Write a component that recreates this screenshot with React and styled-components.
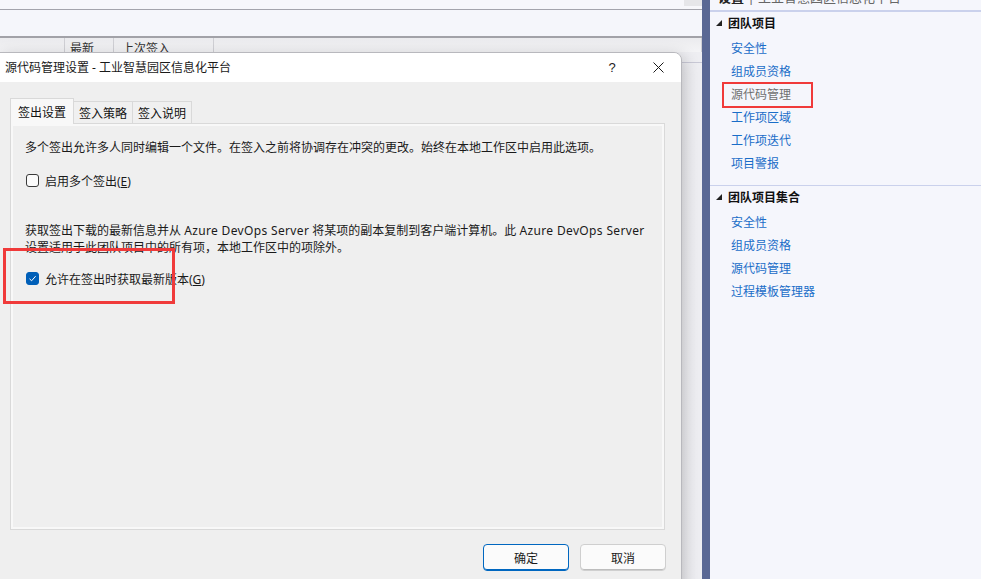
import React from "react";
import styled, { createGlobalStyle } from "styled-components";

const UI = `"Noto Sans", "Noto Sans CJK SC", sans-serif`;

const Global = createGlobalStyle`
  html, body { margin: 0; padding: 0; overflow: hidden; background: #f5f6fc; }
  body { font-family: ${UI}; font-size: 12px; color: #1b1b1b; }
  * { box-sizing: border-box; }
`;

const Screen = styled.div`
  display: flex;
  width: 981px;
  height: 579px;
  overflow: hidden;
`;

/* ---------- background window (left) ---------- */
const LeftArea = styled.div`
  position: relative;
  width: 702px;
  flex: none;
  display: flex;
  flex-direction: column;
  background: #eeeef2;
`;

const TopStrip = styled.div`
  height: 10px;
  background: #f7f7fb;
  border-bottom: 1px solid #a4a4ac;
  display: flex;
  justify-content: flex-end;
`;

const ScrollNub = styled.div`
  width: 18px;
  height: 6px;
  background: #e6e6e9;
`;

const Toolbar = styled.div`
  height: 28px;
  background: #f5f6fb;
  border-bottom: 2px solid #a2a2a8;
`;

const GridHeader = styled.div`
  display: flex;
  height: 14px;
  background: linear-gradient(#ebebee, #f4f4f6);
  overflow: hidden;
`;

const HeaderCell = styled.div`
  width: ${(p) => p.$w}px;
  flex: ${(p) => (p.$w ? "none" : "1")};
  border-right: 1px solid #d0d0d5;
  padding: 3px 0 0 ${(p) => p.$pad || 0}px;
  line-height: 16px;
  color: #333;
  white-space: nowrap;
`;

const ListArea = styled.div`
  flex: 1;
  background: linear-gradient(to right, #e2e2e6, #eeeef2);
`;

const ListRow = styled.div`
  height: 11px;
  border-bottom: 1px solid #c9c9d6;
`;

/* ---------- dialog ---------- */
const Dialog = styled.div`
  position: absolute;
  left: -1px;
  top: 52px;
  width: 683px;
  height: 545px;
  background: #efefef;
  border: 1px solid #b8b8bd;
  border-top-right-radius: 8px;
  box-shadow: 2px 4px 16px rgba(0, 0, 0, 0.22);
  display: flex;
  flex-direction: column;
  overflow: hidden;
`;

const TitleBar = styled.div`
  height: 29px;
  flex: none;
  background: #ffffff;
  display: flex;
  align-items: center;
`;

const Title = styled.div`
  flex: 1;
  padding-left: 5px;
  font-size: 12px;
  line-height: 29px;
  color: #1a1a1a;
  white-space: nowrap;
`;

const TitleButton = styled.div`
  width: 46px;
  height: 29px;
  display: flex;
  align-items: center;
  justify-content: center;
  font-family: "Liberation Sans", sans-serif;
  font-size: 13px;
  color: #222;
`;

const Body = styled.div`
  flex: 1;
  display: flex;
  flex-direction: column;
  padding: 16px 16px 0 10px;
`;

const Tabs = styled.div`
  display: flex;
  align-items: flex-end;
  height: 26px;
  margin-bottom: -1px;
  position: relative;
  z-index: 1;
`;

const Tab = styled.div`
  height: ${(p) => (p.$active ? 26 : 23)}px;
  padding: 0 ${(p) => (p.$active ? 7 : 5)}px;
  margin-left: ${(p) => (p.$first ? 0 : -1)}px;
  display: flex;
  align-items: center;
  border: 1px solid #d9d9d9;
  border-bottom: ${(p) => (p.$active ? "none" : "1px solid #d9d9d9")};
  background: ${(p) => (p.$active ? "#f8f8f8" : "#f0f0f0")};
  color: #111;
  white-space: nowrap;
`;

const Panel = styled.div`
  height: 407px;
  border: 1px solid #d9d9d9;
  box-shadow: inset 0 0 0 2px #f8f8f8;
  background: #efefef;
  padding: 15px 15px 0 14px;
  display: flex;
  flex-direction: column;
`;

const Para = styled.p`
  margin: ${(p) => p.$top || 0}px 0 0;
  line-height: 17px;
  font-size: 12px;
  color: #1a1a1a;
  white-space: nowrap;
`;

const Latin = styled.span`
  letter-spacing: 0.35px;
`;

const CheckRow = styled.div`
  position: relative;
  display: flex;
  align-items: center;
  gap: 6px;
  height: 17px;
  margin-top: ${(p) => p.$top}px;
  padding-left: 1px;
  color: #1a1a1a;
`;

const Box = styled.span`
  width: 13px;
  height: 13px;
  flex: none;
  border-radius: 3px;
  border: 1px solid ${(p) => (p.$checked ? "#005fb8" : "#3a3a3a")};
  background: ${(p) => (p.$checked ? "#005fb8" : "#fbfbfb")};
  display: flex;
  align-items: center;
  justify-content: center;
`;

const RedBox = styled.div`
  position: absolute;
  left: ${(p) => p.$l}px;
  top: ${(p) => p.$t}px;
  width: ${(p) => p.$w}px;
  height: ${(p) => p.$h}px;
  border: ${(p) => p.$b}px solid #f03a3a;
  pointer-events: none;
`;

const ButtonRow = styled.div`
  display: flex;
  justify-content: flex-end;
  gap: 11px;
  margin-top: 14px;
  margin-right: -1px;
`;

const Button = styled.button`
  width: 86px;
  height: 27px;
  border-radius: 4px;
  border: 1px solid ${(p) => (p.$primary ? "#0067c0" : "#cfcfcf")};
  box-shadow: ${(p) => (p.$primary ? "inset 0 -1px 0 #0067c0" : "inset 0 -1px 0 #bdbdbd")};
  background: #fbfbfb;
  font-family: ${UI};
  font-size: 12px;
  color: #1a1a1a;
  padding: 0;
`;

/* ---------- divider ---------- */
const Divider = styled.div`
  width: 8px;
  flex: none;
  background: #5a6894;
`;

/* ---------- right panel ---------- */
const RightPanel = styled.div`
  flex: 1;
  background: #f5f6fc;
  display: flex;
  flex-direction: column;
`;

const RightTop = styled.div`
  height: 12px;
  border-bottom: 2px solid #cad1ec;
  overflow: hidden;
  padding-left: 8px;
`;

const TopTitle = styled.div`
  margin-top: -11px;
  line-height: 16px;
  font-size: 13px;
  white-space: nowrap;
  color: #666;
  b { color: #222; }
`;

const Section = styled.div`
  padding: 1px 0 ${(p) => (p.$last ? 0 : 10)}px;
  border-bottom: ${(p) => (p.$last ? "none" : "1px solid #cad1ec")};
`;

const SectionHead = styled.div`
  display: flex;
  align-items: center;
  gap: 6px;
  height: 20px;
  padding-left: 6px;
  font-weight: bold;
  font-size: 12px;
  color: #111;
`;

const LinkList = styled.div`
  margin-top: 4px;
  padding-left: 21px;
  display: flex;
  flex-direction: column;
  align-items: flex-start;
`;

const LinkItem = styled.div`
  position: relative;
  line-height: 23px;
  font-size: 12px;
  color: ${(p) => (p.$current ? "#707070" : "#1a6dc8")};
  white-space: nowrap;
`;

const Triangle = () => (
  <svg width="6" height="6" viewBox="0 0 6 6">
    <polygon points="6,0 6,6 0,6" fill="#222" />
  </svg>
);

const Check = () => (
  <svg width="9" height="9" viewBox="0 0 9 9">
    <path d="M1.5 4.8 L3.6 6.8 L7.6 2.2" stroke="#fff" strokeWidth="1" fill="none" />
  </svg>
);

const CloseIcon = () => (
  <svg width="11" height="11" viewBox="0 0 11 11">
    <path d="M0.5 0.5 L10.5 10.5 M10.5 0.5 L0.5 10.5" stroke="#1a1a1a" strokeWidth="1" />
  </svg>
);

const projectLinks = ["安全性", "组成员资格", "源代码管理", "工作项区域", "工作项迭代", "项目警报"];
const collectionLinks = ["安全性", "组成员资格", "源代码管理", "过程模板管理器"];

export default function App() {
  return (
    <>
      <Global />
      <Screen>
        <LeftArea>
          <TopStrip>
            <ScrollNub />
          </TopStrip>
          <Toolbar />
          <GridHeader>
            <HeaderCell $w={65} />
            <HeaderCell $w={49} $pad={5}>最新</HeaderCell>
            <HeaderCell $w={100} $pad={8}>上次签入</HeaderCell>
            <HeaderCell />
          </GridHeader>
          <ListArea>
            <ListRow />
          </ListArea>

          <Dialog>
            <TitleBar>
              <Title>源代码管理设置 - 工业智慧园区信息化平台</Title>
              <TitleButton>?</TitleButton>
              <TitleButton>
                <CloseIcon />
              </TitleButton>
            </TitleBar>
            <Body>
              <Tabs>
                <Tab $active $first>签出设置</Tab>
                <Tab>签入策略</Tab>
                <Tab>签入说明</Tab>
              </Tabs>
              <Panel>
                <Para>多个签出允许多人同时编辑一个文件。在签入之前将协调存在冲突的更改。始终在本地工作区中启用此选项。</Para>
                <CheckRow $top={16}>
                  <Box />
                  <span>
                    启用多个签出(<u>E</u>)
                  </span>
                </CheckRow>
                <Para $top={33}>
                  获取签出下载的最新信息并从 <Latin>Azure DevOps Server</Latin> 将某项的副本复制到客户端计算机。此 <Latin>Azure DevOps Server</Latin>
                  <br />
                  设置适用于此团队项目中的所有项，本地工作区中的项除外。
                </Para>
                <CheckRow $top={14}>
                  <Box $checked>
                    <Check />
                  </Box>
                  <span>
                    允许在签出时获取最新版本(<u>G</u>)
                  </span>
                  <RedBox $l={-22} $t={-22} $w={172} $h={56} $b={3} />
                </CheckRow>
              </Panel>
              <ButtonRow>
                <Button $primary>确定</Button>
                <Button>取消</Button>
              </ButtonRow>
            </Body>
          </Dialog>
        </LeftArea>

        <Divider />

        <RightPanel>
          <RightTop>
            <TopTitle>
              <b>设置</b> | 工业智慧园区信息化平台
            </TopTitle>
          </RightTop>
          <Section>
            <SectionHead>
              <Triangle />
              团队项目
            </SectionHead>
            <LinkList>
              {projectLinks.map((t) => (
                <LinkItem key={t} $current={t === "源代码管理"}>
                  {t}
                  {t === "源代码管理" && <RedBox $l={-9} $t={-1} $w={91} $h={26} $b={2} />}
                </LinkItem>
              ))}
            </LinkList>
          </Section>
          <Section $last>
            <SectionHead>
              <Triangle />
              团队项目集合
            </SectionHead>
            <LinkList>
              {collectionLinks.map((t) => (
                <LinkItem key={t}>{t}</LinkItem>
              ))}
            </LinkList>
          </Section>
        </RightPanel>
      </Screen>
    </>
  );
}
